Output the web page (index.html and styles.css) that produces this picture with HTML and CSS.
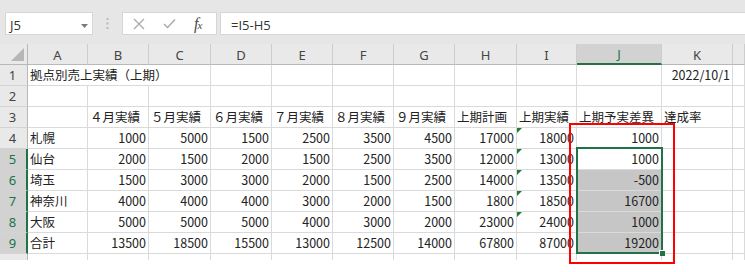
FILE: index.html
```html
<!DOCTYPE html>
<html lang="ja">
<head>
<meta charset="utf-8">
<title>Sheet</title>
<link rel="stylesheet" href="styles.css">
</head>
<body>
<div class="page">
  <div class="topbar">
    <div class="namebox">
      <span class="nb-text">J5</span>
      <svg class="nb-arrow" width="7" height="4" viewBox="0 0 7 4"><polygon points="0,0 7,0 3.5,4" fill="#7a7a7a"/></svg>
    </div>
    <svg class="grip" width="3" height="11" viewBox="0 0 3 11"><rect x="0.5" y="0" width="2" height="2" fill="#b9b9b9"/><rect x="0.5" y="4.5" width="2" height="2" fill="#b9b9b9"/><rect x="0.5" y="9" width="2" height="2" fill="#b9b9b9"/></svg>
    <div class="fxbox">
      <svg class="ico" width="12" height="12" viewBox="0 0 12 12"><path d="M1 1 L11 11 M11 1 L1 11" stroke="#a8a8a8" stroke-width="1.2" fill="none"/></svg>
      <svg class="ico" width="13" height="11" viewBox="0 0 13 11"><path d="M1 6 L4.5 9.5 L12 1.5" stroke="#a8a8a8" stroke-width="1.4" fill="none"/></svg>
      <span class="fx">f<span class="fx-x">x</span></span>
    </div>
    <div class="formula">=I5-H5</div>
  </div>

  <div class="sheet">
    <div class="grid">
      <!-- header -->
      <div class="ch corner"><svg width="13" height="13" viewBox="0 0 13 13"><polygon points="13,0 13,13 0,13" fill="#b6b6b6"/></svg></div>
      <div class="ch">A</div><div class="ch">B</div><div class="ch">C</div><div class="ch">D</div><div class="ch">E</div><div class="ch">F</div><div class="ch">G</div><div class="ch">H</div><div class="ch">I</div><div class="ch ch-sel">J</div><div class="ch">K</div><div class="ch"></div>

      <!-- row 1 -->
      <div class="rh">1</div>
      <div class="c span3">拠点別売上実績（上期）</div>
      <div class="c"></div><div class="c"></div><div class="c"></div><div class="c"></div><div class="c"></div><div class="c"></div><div class="c"></div>
      <div class="c n">2022/10/1</div><div class="c"></div>

      <!-- row 2 -->
      <div class="rh">2</div>
      <div class="c"></div><div class="c"></div><div class="c"></div><div class="c"></div><div class="c"></div><div class="c"></div><div class="c"></div><div class="c"></div><div class="c"></div><div class="c"></div><div class="c"></div><div class="c"></div>

      <!-- row 3 -->
      <div class="rh">3</div>
      <div class="c"></div>
      <div class="c">４月実績</div><div class="c">５月実績</div><div class="c">６月実績</div><div class="c">７月実績</div><div class="c">８月実績</div><div class="c">９月実績</div>
      <div class="c">上期計画</div><div class="c">上期実績</div><div class="c">上期予実差異</div><div class="c">達成率</div><div class="c"></div>

      <!-- row 4 -->
      <div class="rh">4</div>
      <div class="c">札幌</div>
      <div class="c n">1000</div><div class="c n">5000</div><div class="c n">1500</div><div class="c n">2500</div><div class="c n">3500</div><div class="c n">4500</div>
      <div class="c n">17000</div><div class="c n err">18000</div><div class="c n">1000</div><div class="c"></div><div class="c"></div>

      <!-- row 5 -->
      <div class="rh rh-sel">5</div>
      <div class="c">仙台</div>
      <div class="c n">2000</div><div class="c n">1500</div><div class="c n">2000</div><div class="c n">1500</div><div class="c n">2500</div><div class="c n">3500</div>
      <div class="c n">12000</div><div class="c n err">13000</div><div class="c n">1000</div><div class="c"></div><div class="c"></div>

      <!-- row 6 -->
      <div class="rh rh-sel">6</div>
      <div class="c">埼玉</div>
      <div class="c n">1500</div><div class="c n">3000</div><div class="c n">3000</div><div class="c n">2000</div><div class="c n">1500</div><div class="c n">2500</div>
      <div class="c n">14000</div><div class="c n err">13500</div><div class="c n shade">-500</div><div class="c"></div><div class="c"></div>

      <!-- row 7 -->
      <div class="rh rh-sel">7</div>
      <div class="c">神奈川</div>
      <div class="c n">4000</div><div class="c n">4000</div><div class="c n">4000</div><div class="c n">3000</div><div class="c n">2000</div><div class="c n">1500</div>
      <div class="c n">1800</div><div class="c n err">18500</div><div class="c n shade">16700</div><div class="c"></div><div class="c"></div>

      <!-- row 8 -->
      <div class="rh rh-sel">8</div>
      <div class="c">大阪</div>
      <div class="c n">5000</div><div class="c n">5000</div><div class="c n">5000</div><div class="c n">4000</div><div class="c n">3000</div><div class="c n">2000</div>
      <div class="c n">23000</div><div class="c n err">24000</div><div class="c n shade">1000</div><div class="c"></div><div class="c"></div>

      <!-- row 9 -->
      <div class="rh rh-sel">9</div>
      <div class="c">合計</div>
      <div class="c n">13500</div><div class="c n">18500</div><div class="c n">15500</div><div class="c n">13000</div><div class="c n">12500</div><div class="c n">14000</div>
      <div class="c n">67800</div><div class="c n">87000</div><div class="c n shade">19200</div><div class="c"></div><div class="c"></div>

      <!-- row 10 -->
      <div class="rh">10</div>
      <div class="c"></div><div class="c"></div><div class="c"></div><div class="c"></div><div class="c"></div><div class="c"></div><div class="c"></div><div class="c"></div><div class="c"></div><div class="c"></div><div class="c"></div><div class="c"></div>
    </div>
  </div>

  <div class="selection"></div>
  <div class="handle"></div>
  <div class="redbox"></div>
</div>
</body>
</html>
```

FILE: styles.css
```css
html, body {
  margin: 0;
  padding: 0;
  background: #ffffff;
}

.page {
  position: relative;
  width: 745px;
  height: 272px;
  overflow: hidden;
  background: #ffffff;
}

/* ---------- formula bar ---------- */
.topbar {
  height: 44px;
  box-sizing: border-box;
  background: #e6e6e6;
  padding-top: 12px;
  display: flex;
  align-items: flex-start;
}

.namebox {
  margin-left: 5px;
  width: 88px;
  height: 23px;
  box-sizing: border-box;
  background: #ffffff;
  border: 1px solid #d6d6d6;
  display: flex;
  align-items: center;
  justify-content: space-between;
  padding: 0 4px 0 4px;
  font-family: "Open Sans", "Noto Sans", sans-serif;
  font-size: 13px;
  color: #333333;
}

.nb-text {
  padding-top: 3px;
}

.nb-arrow {
  margin-top: 4px;
}

.grip {
  margin-left: 13px;
  margin-right: 13px;
  margin-top: 6px;
}

.fxbox {
  width: 95px;
  height: 23px;
  box-sizing: border-box;
  background: #ffffff;
  border: 1px solid #d6d6d6;
  display: flex;
  align-items: center;
  padding-left: 10px;
  gap: 18px;
}

.fx {
  font-family: "Liberation Serif", serif;
  font-style: italic;
  font-size: 16px;
  color: #4a4a4a;
  line-height: 16px;
  padding-top: 1px;
}

.fx-x {
  font-size: 11px;
  margin-left: -1px;
}

.formula {
  margin-left: 3px;
  flex: 1;
  margin-right: -3px;
  height: 23px;
  box-sizing: border-box;
  background: #ffffff;
  border: 1px solid #d6d6d6;
  padding-left: 10px;
  padding-top: 3px;
  font-family: "Open Sans", "Noto Sans", sans-serif;
  font-size: 13px;
  color: #333333;
  line-height: 18px;
}

/* ---------- sheet ---------- */
.sheet {
  height: 216px;
  overflow: hidden;
}

.grid {
  display: grid;
  grid-template-columns: 28px 60px 61px 62px 61px 61px 61px 61px 62px 60px 85px 71px 1fr;
  grid-auto-rows: 21px;
}

.ch {
  box-sizing: border-box;
  background: #e9e9e9;
  border-right: 1px solid #cdcdcd;
  border-bottom: 1px solid #b8b8b8;
  display: flex;
  align-items: center;
  justify-content: center;
  font-family: "Noto Sans", "Open Sans", sans-serif;
  font-size: 13px;
  color: #444444;
  padding-top: 1px;
}

.corner {
  border-right: 1px solid #b8b8b8;
  justify-content: flex-end;
  align-items: flex-end;
  padding: 0 3px 3px 0;
}

.corner svg {
  display: block;
}

.ch-sel {
  background: #d2d2d2;
  color: #217346;
  border-bottom: 2px solid #217346;
}

.rh {
  box-sizing: border-box;
  background: #e9e9e9;
  border-right: 1px solid #b8b8b8;
  border-bottom: 1px solid #d4d4d4;
  display: flex;
  align-items: center;
  justify-content: center;
  padding-right: 2px;
  font-family: "Noto Sans", "Open Sans", sans-serif;
  font-size: 13px;
  color: #444444;
}

.rh-sel {
  background: #d2d2d2;
  color: #217346;
  border-right: 2px solid #217346;
  padding-right: 1px;
}

.c {
  position: relative;
  box-sizing: border-box;
  border-right: 1px solid #dadada;
  border-bottom: 1px solid #dadada;
  display: flex;
  align-items: center;
  padding: 0 2px 1px 2px;
  font-family: "Noto Sans CJK JP", "Noto Sans", sans-serif;
  font-size: 12.5px;
  color: #222222;
  white-space: nowrap;
  line-height: 20px;
}

.span3 {
  grid-column: span 3;
}

.n {
  justify-content: flex-end;
}

.shade {
  background: #c6c6c6;
}

.err::before {
  content: "";
  position: absolute;
  left: 0;
  top: 0;
  width: 0;
  height: 0;
  border-top: 5px solid #1e7a36;
  border-right: 5px solid transparent;
}

/* ---------- overlays ---------- */
.selection {
  position: absolute;
  left: 576px;
  top: 147px;
  width: 87px;
  height: 107px;
  box-sizing: border-box;
  border: 2px solid #217346;
}

.handle {
  position: absolute;
  left: 659px;
  top: 250px;
  width: 5px;
  height: 5px;
  background: #217346;
  border-left: 1px solid #ffffff;
  border-top: 1px solid #ffffff;
}

.redbox {
  position: absolute;
  left: 569px;
  top: 123px;
  width: 106px;
  height: 141px;
  box-sizing: border-box;
  border: 2px solid #ff0000;
}
```
